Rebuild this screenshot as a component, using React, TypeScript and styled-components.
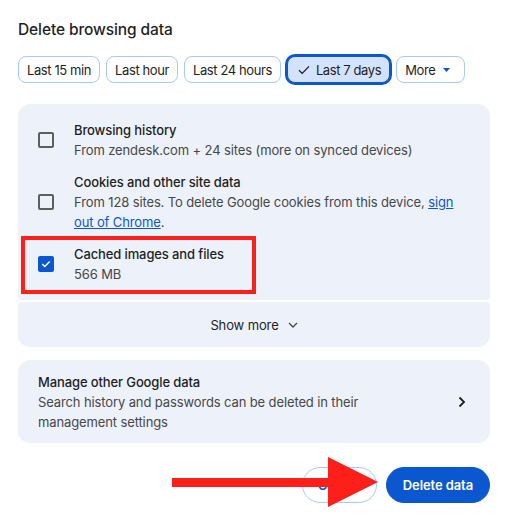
import styled, { createGlobalStyle } from 'styled-components'

const GlobalStyle = createGlobalStyle`
  html, body {
    margin: 0;
    padding: 0;
    background: #ffffff;
  }
  body {
    font-family: Inter, 'Liberation Sans', sans-serif;
    color: #1f1f1f;
    -webkit-font-smoothing: antialiased;
  }
`

const Dialog = styled.div`
  box-sizing: border-box;
  width: 507px;
  height: 523px;
  padding: 18px 17px 0 18px;
`

const Title = styled.h1`
  margin: 0;
  font-size: 15.5px;
  line-height: 24px;
  font-weight: 500;
  letter-spacing: -0.1px;
  color: #1f1f1f;
`

const ChipRow = styled.div`
  display: flex;
  gap: 6px;
  margin-top: 14px;
`

const Chip = styled.button<{ $selected?: boolean }>`
  box-sizing: border-box;
  height: 27px;
  display: inline-flex;
  align-items: center;
  gap: 6px;
  padding: 0 8px;
  border: 1px solid ${(p) => (p.$selected ? '#0b57d0' : '#a8c7fa')};
  border-radius: 8px;
  background: ${(p) => (p.$selected ? '#d3e3fd' : '#ffffff')};
  box-shadow: ${(p) => (p.$selected ? '0 0 0 2px #0b57d0' : 'none')};
  font-family: inherit;
  font-size: 13px;
  letter-spacing: -0.4px;
  color: #1f1f1f;
  cursor: pointer;
`

const SelectedChip = styled(Chip)`
  padding-left: 10px;
`

const MoreChip = styled(Chip)`
  gap: 8px;
  padding-right: 14px;
`

const Panel = styled.div`
  margin-top: 21px;
  background: #edf2fa;
  border-radius: 12px 12px 4px 4px;
  padding: 16px 0;
  display: flex;
  flex-direction: column;
  gap: 12px;
`

const OptionRow = styled.div`
  position: relative;
  display: flex;
  align-items: center;
  gap: 20px;
  padding: 0 20px;
`

const Box = styled.span<{ $checked?: boolean }>`
  box-sizing: border-box;
  flex: none;
  width: 16px;
  height: 16px;
  border-radius: 2px;
  border: 2px solid ${(p) => (p.$checked ? '#0b57d0' : '#5e5e5e')};
  background: ${(p) => (p.$checked ? '#0b57d0' : 'transparent')};
  display: flex;
  align-items: center;
  justify-content: center;
`

const OptionText = styled.div`
  font-size: 13px;
  line-height: 20px;
  letter-spacing: -0.12px;
`

const OptionTitle = styled.div`
  font-weight: 500;
  color: #1f1f1f;
`

const OptionSub = styled.div`
  color: #474747;
`

const Link = styled.a`
  color: #0b57d0;
  text-decoration: underline;
`

const Highlight = styled.div`
  position: absolute;
  box-sizing: border-box;
  left: 3px;
  top: -8px;
  width: 235px;
  height: 58px;
  border: 4px solid #fe1f1b;
  pointer-events: none;
`

const ShowMore = styled.div`
  margin-top: 2px;
  height: 45px;
  background: #edf2fa;
  border-radius: 4px 4px 12px 12px;
  display: flex;
  align-items: center;
  justify-content: center;
  gap: 9px;
  font-size: 13px;
  letter-spacing: -0.12px;
  color: #1f1f1f;
`

const ManageCard = styled.div`
  margin-top: 13px;
  background: #edf2fa;
  border-radius: 12px;
  padding: 12px 24px 11px 20px;
  display: flex;
  align-items: center;
  gap: 60px;
`

const ManageText = styled(OptionText)`
  flex: 1;
`

const Footer = styled.div`
  position: relative;
  margin-top: 24px;
  display: flex;
  justify-content: flex-end;
  gap: 9px;
`

const Button = styled.button<{ $primary?: boolean }>`
  box-sizing: border-box;
  height: 36px;
  padding: 0 ${(p) => (p.$primary ? 16 : 15)}px;
  border-radius: 18px;
  border: 1px solid ${(p) => (p.$primary ? '#0b57d0' : '#a8c7fa')};
  background: ${(p) => (p.$primary ? '#0b57d0' : '#ffffff')};
  color: ${(p) => (p.$primary ? '#ffffff' : '#0b57d0')};
  font-family: inherit;
  font-size: 13px;
  font-weight: 600;
  letter-spacing: -0.1px;
  cursor: pointer;
`

const Arrow = styled.svg`
  position: absolute;
  left: 154px;
  top: -10px;
  pointer-events: none;
`

const options = [
  {
    title: 'Browsing history',
    sub: <>From zendesk.com + 24 sites (more on synced devices)</>,
  },
  {
    title: 'Cookies and other site data',
    sub: (
      <>
        From 128 sites. To delete Google cookies from this device,{' '}
        <Link>sign out of Chrome</Link>.
      </>
    ),
  },
  { title: 'Cached images and files', sub: <>566 MB</>, checked: true },
]

const ranges = ['Last 15 min', 'Last hour', 'Last 24 hours']

export default function App() {
  return (
    <Dialog>
      <GlobalStyle />
      <Title>Delete browsing data</Title>

      <ChipRow>
        {ranges.map((r) => (
          <Chip key={r}>{r}</Chip>
        ))}
        <SelectedChip $selected>
          <svg width="12" height="10" viewBox="0 0 12 10">
            <path d="M1 5.2 L4.2 8.4 L11 1.4" fill="none" stroke="#1f1f1f" strokeWidth="1.3" />
          </svg>
          Last 7 days
        </SelectedChip>
        <MoreChip>
          More
          <svg width="7" height="4" viewBox="0 0 7 4">
            <path d="M0 0 L7 0 L3.5 4 Z" fill="#0b57d0" />
          </svg>
        </MoreChip>
      </ChipRow>

      <Panel>
        {options.map((o) => (
          <OptionRow key={o.title}>
            <Box $checked={o.checked}>
              {o.checked && (
                <svg width="10" height="8" viewBox="0 0 10 8">
                  <path d="M1.3 4.2 L3.8 6.5 L8.7 1.5" fill="none" stroke="#ffffff" strokeWidth="1.6" />
                </svg>
              )}
            </Box>
            <OptionText>
              <OptionTitle>{o.title}</OptionTitle>
              <OptionSub>{o.sub}</OptionSub>
            </OptionText>
            {o.checked && <Highlight />}
          </OptionRow>
        ))}
      </Panel>

      <ShowMore>
        Show more
        <svg width="10" height="6" viewBox="0 0 10 6">
          <path d="M1 1 L5 5 L9 1" fill="none" stroke="#474747" strokeWidth="1.3" />
        </svg>
      </ShowMore>

      <ManageCard>
        <ManageText>
          <OptionTitle>Manage other Google data</OptionTitle>
          <OptionSub>Search history and passwords can be deleted in their management settings</OptionSub>
        </ManageText>
        <svg width="8" height="12" viewBox="0 0 8 12">
          <path d="M1.5 1.5 L6 6 L1.5 10.5" fill="none" stroke="#1f1f1f" strokeWidth="1.8" />
        </svg>
      </ManageCard>

      <Footer>
        <Button>Cancel</Button>
        <Button $primary>Delete data</Button>
        <Arrow width="206" height="50" viewBox="0 0 206 50">
          <rect x="0" y="21" width="157" height="9" fill="#fe1f1b" />
          <polygon points="156,0 206,25 156,50" fill="#fe1f1b" />
        </Arrow>
      </Footer>
    </Dialog>
  )
}
